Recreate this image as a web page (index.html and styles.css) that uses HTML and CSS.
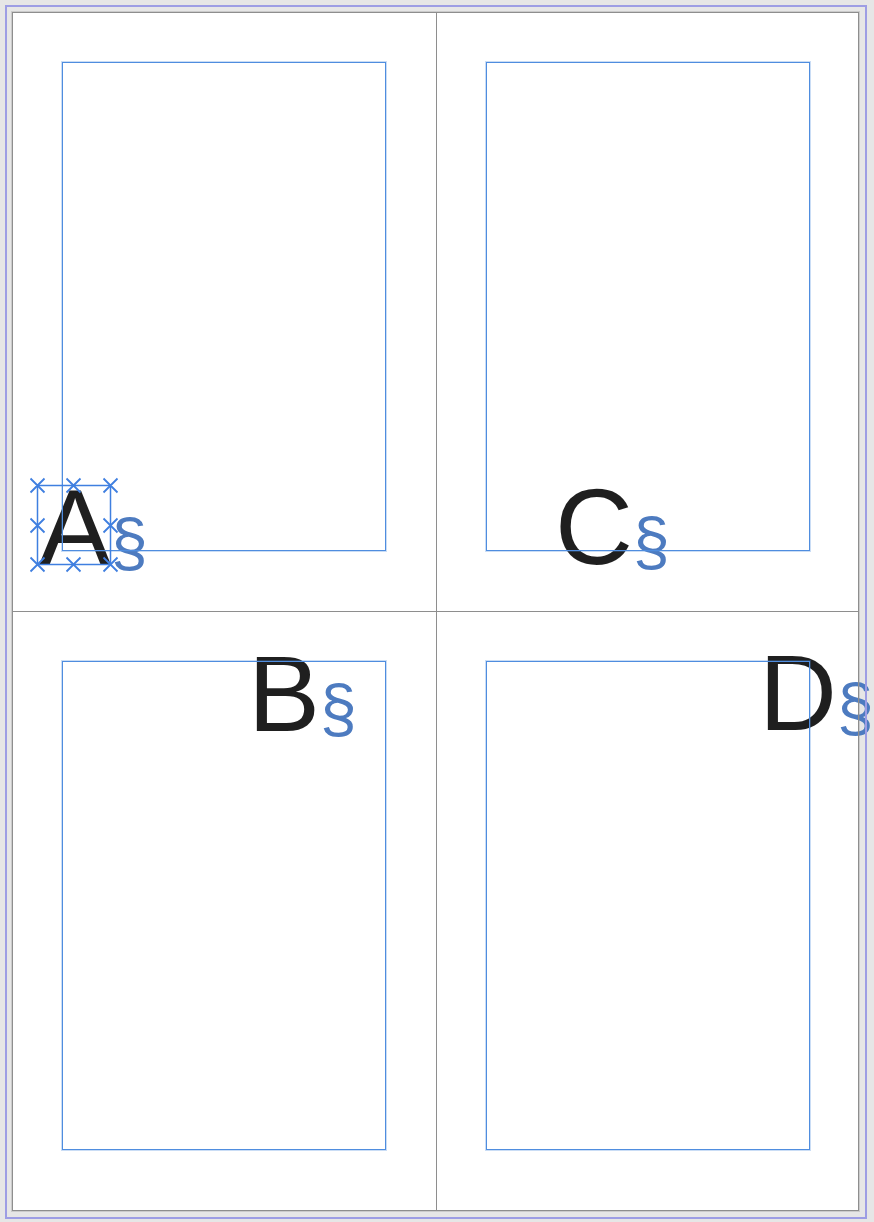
FILE: index.html
```html
<!DOCTYPE html>
<html lang="en">
<head>
    <meta charset="UTF-8">
    <title>Page layout</title>
    <link rel="stylesheet" href="styles.css">
</head>
<body>
    <div class="viewport">
        <div class="sheet">
            <section class="page">
                <div class="margin-box"></div>
                <div class="glyph glyph-a">A<span class="anchor">§</span></div>
                <svg class="selection" width="91" height="98" viewBox="0 0 91 98">
                    <rect x="9.5" y="9.5" width="73" height="79" />
                    <!-- handles: corners and midpoints -->
                    <path class="handles" d="M2.5 2.5l14 14M16.5 2.5l-14 14
                             M38.5 2.5l14 14M52.5 2.5l-14 14
                             M75.5 2.5l14 14M89.5 2.5l-14 14
                             M2.5 42.5l14 14M16.5 42.5l-14 14
                             M75.5 42.5l14 14M89.5 42.5l-14 14
                             M2.5 81.5l14 14M16.5 81.5l-14 14
                             M38.5 81.5l14 14M52.5 81.5l-14 14
                             M75.5 81.5l14 14M89.5 81.5l-14 14" />
                </svg>
            </section>
            <section class="page">
                <div class="margin-box"></div>
                <div class="glyph glyph-c">C<span class="anchor">§</span></div>
            </section>
            <section class="page">
                <div class="margin-box"></div>
                <div class="glyph glyph-b">B<span class="anchor">§</span></div>
            </section>
            <section class="page">
                <div class="margin-box"></div>
                <div class="glyph glyph-d">D<span class="anchor">§</span></div>
            </section>
        </div>
    </div>
</body>
</html>
```
FILE: styles.css
```css
body {
    margin: 0;
    padding: 5px;
    background: #e6e6e6;
    font-family: "Liberation Sans", Arial, sans-serif;
}
.viewport {
    position: relative;
    width: 862px;
    border: 2px solid #a3a3e6;
    box-sizing: border-box;
    padding: 5px 6px 6px 5px;
}
/* frame lines are painted over the text that runs past the page */
.viewport::after {
    content: '';
    position: absolute;
    inset: -2px;
    border: 2px solid #9d9de4;
    z-index: 3;
    pointer-events: none;
}
.sheet {
    position: relative;
    display: grid;
    grid-template-columns: 423px 421px;
    grid-template-rows: 598px 598px;
    gap: 1px;
    background: #8e8e8e;
    border: 1px solid #8e8e8e;
}
.sheet::after {
    content: '';
    position: absolute;
    inset: -1px;
    border: 1px solid #8e8e8e;
    box-shadow: 0 0 0 1px rgba(142, 142, 142, 0.3);
    z-index: 3;
    pointer-events: none;
}
.page {
    position: relative;
    background: #fff;
    padding: 49px;
}
.margin-box {
    position: relative;
    width: 324px;
    height: 489px;
    box-sizing: border-box;
    border: 1px solid #4f8ddf;
    box-shadow: 0 0 0 1px rgba(79, 141, 223, 0.3);
    z-index: 2;
}
.glyph {
    position: absolute;
    font-size: 108px;
    line-height: 1;
    color: #1f1f1f;
    white-space: nowrap;
    z-index: 1;
}
.anchor {
    font-size: 66px;
    color: #4d7bc0;
}
.glyph-a { left: 26px; top: 461px; }
.glyph-c { left: 118px; top: 460px; }
.glyph-b { left: 235px; top: 28px; }
.glyph-d { left: 322px; top: 27px; }
.selection {
    position: absolute;
    left: 15px;
    top: 463px;
    z-index: 2;
    fill: none;
    stroke: #3f7fe0;
    stroke-width: 1.5;
}
.selection .handles {
    stroke-width: 1.8;
}
```
